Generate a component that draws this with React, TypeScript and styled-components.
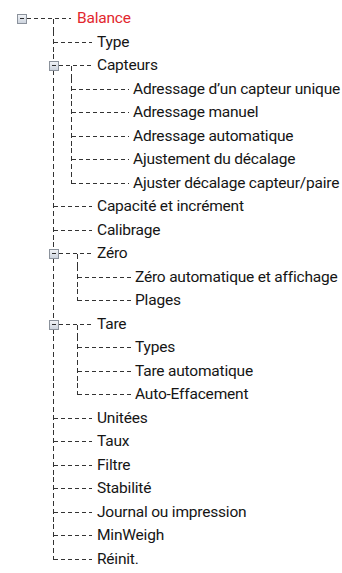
import styled, { createGlobalStyle } from 'styled-components'

interface TreeNode {
  label: string
  // x of the vertical guide that runs down to the children
  guideX?: number
  // x where the children's labels start
  childX?: number
  children?: TreeNode[]
}

const tree: TreeNode = {
  label: 'Balance',
  children: [
    { label: 'Type' },
    {
      label: 'Capteurs',
      guideX: 71,
      childX: 133,
      children: [
        { label: 'Adressage d’un capteur unique' },
        { label: 'Adressage manuel' },
        { label: 'Adressage automatique' },
        { label: 'Ajustement du décalage' },
        { label: 'Ajuster décalage capteur/paire' },
      ],
    },
    { label: 'Capacité et incrément' },
    { label: 'Calibrage' },
    {
      label: 'Zéro',
      guideX: 77,
      childX: 135,
      children: [{ label: 'Zéro automatique et affichage' }, { label: 'Plages' }],
    },
    {
      label: 'Tare',
      guideX: 77,
      childX: 135,
      children: [{ label: 'Types' }, { label: 'Tare automatique' }, { label: 'Auto-Effacement' }],
    },
    { label: 'Unitées' },
    { label: 'Taux' },
    { label: 'Filtre' },
    { label: 'Stabilité' },
    { label: 'Journal ou impression' },
    { label: 'MinWeigh' },
    { label: 'Réinit.' },
  ],
}

const ROW_H = 23.5
const MID = 11.5
const TRUNK = 53.5
const LINE = '#333333'

interface FlatRow {
  node: TreeNode
  level: number
  last: boolean
  parent?: TreeNode
  x: number
}

function flatten(root: TreeNode): FlatRow[] {
  const rows: FlatRow[] = [{ node: root, level: 0, last: true, x: 77 }]
  root.children?.forEach((child, i, arr) => {
    rows.push({ node: child, level: 1, last: i === arr.length - 1, parent: root, x: 97 })
    child.children?.forEach((sub, j, subs) => {
      rows.push({
        node: sub,
        level: 2,
        last: j === subs.length - 1,
        parent: child,
        x: child.childX ?? 134,
      })
    })
  })
  return rows
}

const GlobalStyle = createGlobalStyle`
  html, body {
    margin: 0;
    padding: 0;
    background: #ffffff;
  }
`

const Page = styled.div`
  width: 342px;
  height: 573px;
  padding-top: 7px;
  box-sizing: border-box;
  overflow: hidden;
  background: #ffffff;
`

const TreeList = styled.ul`
  list-style: none;
  margin: 0;
  padding: 0;
`

const Row = styled.li`
  display: flex;
  align-items: center;
  height: ${ROW_H}px;
`

const Gutter = styled.svg`
  flex: none;
  display: block;
  height: ${ROW_H}px;
`

const Label = styled.span<{ $root?: boolean }>`
  font-family: Roboto, 'Liberation Sans', sans-serif;
  font-size: 15.5px;
  letter-spacing: -0.2px;
  line-height: ${ROW_H}px;
  white-space: nowrap;
  color: ${(p) => (p.$root ? '#e2262d' : '#151515')};
`

function HLine({ from, to }: { from: number; to: number }) {
  return (
    <line
      x1={from}
      x2={to}
      y1={MID}
      y2={MID}
      stroke={LINE}
      strokeWidth={1}
      strokeDasharray="4 3"
      shapeRendering="crispEdges"
    />
  )
}

function VLine({ x, from, to }: { x: number; from: number; to: number }) {
  return (
    <line
      x1={x}
      x2={x}
      y1={from}
      y2={to}
      stroke={LINE}
      strokeWidth={1}
      strokeDasharray="5 3"
      shapeRendering="crispEdges"
    />
  )
}

function Toggle({ cx }: { cx: number }) {
  return (
    <g shapeRendering="crispEdges">
      <rect x={cx - 4.5} y={MID - 4.5} width={9} height={9} fill="url(#toggle-fill)" stroke="#8b929c" />
      <line x1={cx - 2} x2={cx + 2} y1={MID} y2={MID} stroke="#2b2b2b" />
    </g>
  )
}

function Connector({ row }: { row: FlatRow }) {
  const { level, last, node, parent, x } = row
  const parts: React.ReactNode[] = []

  if (level === 0) {
    parts.push(<HLine key="h" from={27} to={71} />)
    parts.push(<VLine key="trunk" x={TRUNK} from={MID} to={ROW_H} />)
    parts.push(<Toggle key="t" cx={22} />)
  } else if (level === 1) {
    parts.push(<VLine key="trunk" x={TRUNK} from={0} to={last ? MID : ROW_H} />)
    if (node.children) {
      const gx = (node.guideX ?? 71) + 0.5
      parts.push(<HLine key="h" from={59} to={92} />)
      parts.push(<VLine key="guide" x={gx} from={MID} to={ROW_H} />)
      parts.push(<Toggle key="t" cx={54} />)
    } else {
      parts.push(<HLine key="h" from={TRUNK} to={92} />)
    }
  } else {
    const gx = (parent?.guideX ?? 71) + 0.5
    parts.push(<VLine key="trunk" x={TRUNK} from={0} to={ROW_H} />)
    parts.push(<VLine key="guide" x={gx} from={0} to={last ? MID : ROW_H} />)
    parts.push(<HLine key="h" from={gx} to={x - 4} />)
  }

  return (
    <Gutter width={x} viewBox={`0 0 ${x} ${ROW_H}`}>
      <defs>
        <linearGradient id="toggle-fill" x1="0" y1="0" x2="0" y2="1">
          <stop offset="0" stopColor="#f4f6f9" />
          <stop offset="1" stopColor="#cdd4de" />
        </linearGradient>
      </defs>
      {parts}
    </Gutter>
  )
}

export default function App(): JSX.Element {
  const rows = flatten(tree)

  return (
    <>
      <GlobalStyle />
      <Page>
        <TreeList role="tree">
          {rows.map((row, i) => (
            <Row key={i} role="treeitem" aria-level={row.level + 1}>
              <Connector row={row} />
              <Label $root={row.level === 0}>{row.node.label}</Label>
            </Row>
          ))}
        </TreeList>
      </Page>
    </>
  )
}
